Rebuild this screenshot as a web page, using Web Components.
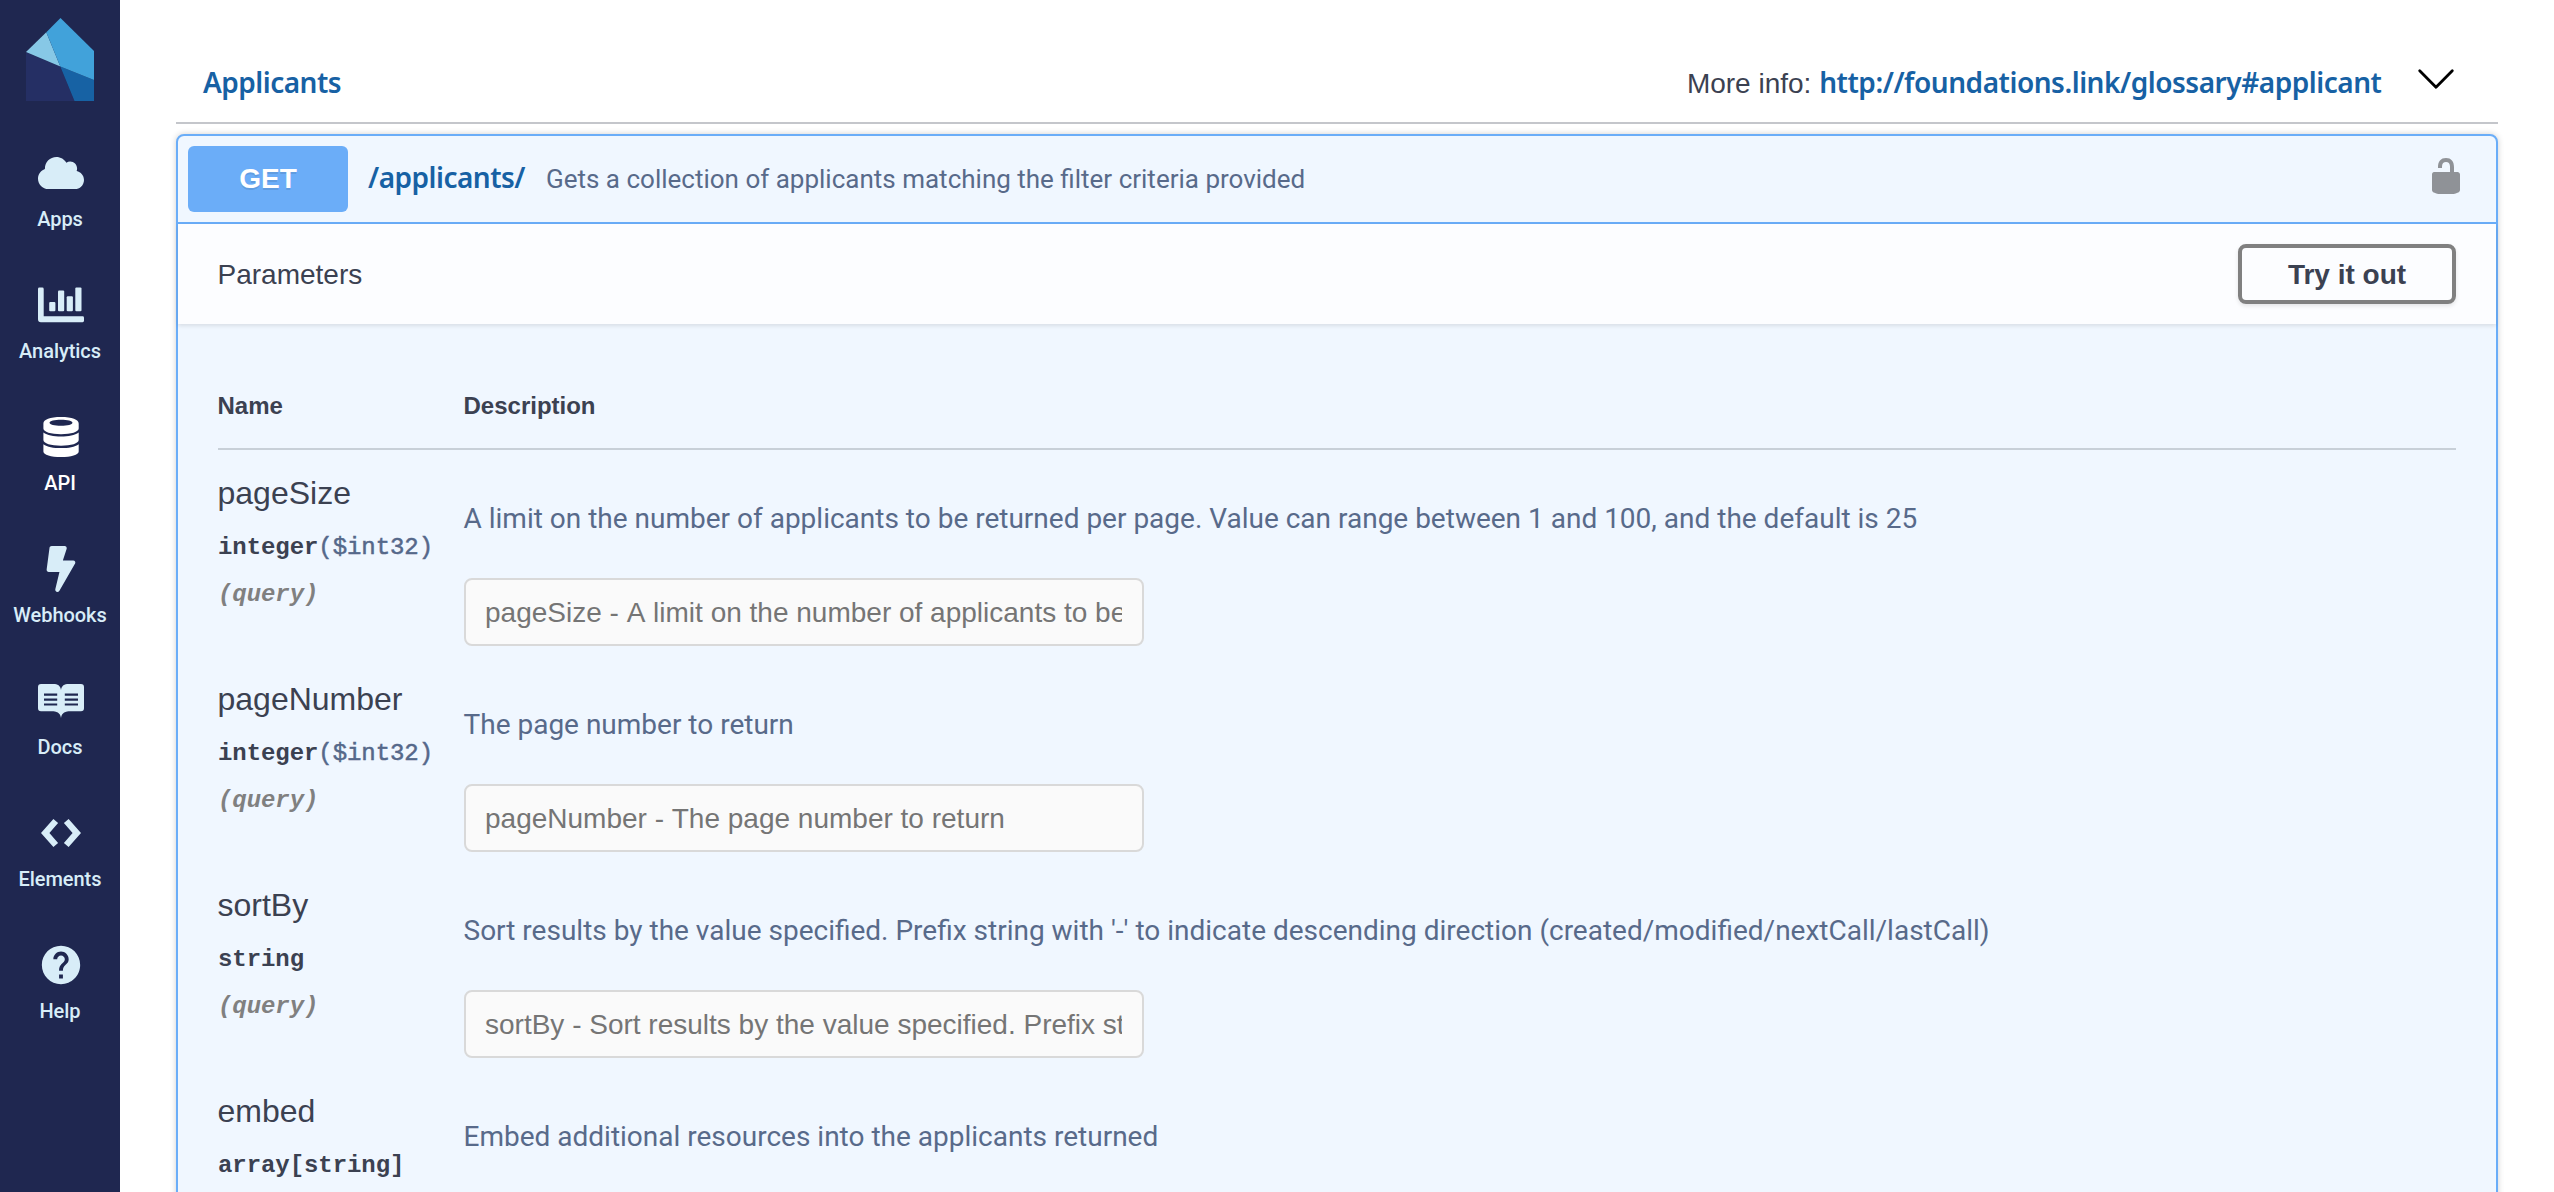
<!DOCTYPE html>
<html lang="en">
<head>
<meta charset="utf-8">
<title>API – Applicants</title>
<style>
html,body{margin:0;height:100%;overflow:hidden;background:#fff}
body{font-family:"Liberation Sans",Arial,sans-serif;color:#3b4151;font-size:28px}
</style>
</head>
<body>
<api-shell>
  <side-nav slot="nav">
    <nav-item icon="cloud">Apps</nav-item>
    <nav-item icon="chart">Analytics</nav-item>
    <nav-item icon="database" active>API</nav-item>
    <nav-item icon="bolt">Webhooks</nav-item>
    <nav-item icon="book">Docs</nav-item>
    <nav-item icon="code">Elements</nav-item>
    <nav-item icon="help">Help</nav-item>
  </side-nav>
  <tag-header link="http://foundations.link/glossary#applicant">Applicants</tag-header>
  <op-block method="GET" path="/applicants/" summary="Gets a collection of applicants matching the filter criteria provided">
    <param-row name="pageSize" type="integer" format="($int32)" hint="pageSize - A limit on the number of applicants to be returned per page">A limit on the number of applicants to be returned per page. Value can range between 1 and 100, and the default is 25</param-row>
    <param-row name="pageNumber" type="integer" format="($int32)" hint="pageNumber - The page number to return">The page number to return</param-row>
    <param-row name="sortBy" type="string" hint="sortBy - Sort results by the value specified. Prefix string with '-'">Sort results by the value specified. Prefix string with '-' to indicate descending direction (created/modified/nextCall/lastCall)</param-row>
    <param-row name="embed" type="array[string]">Embed additional resources into the applicants returned</param-row>
  </op-block>
</api-shell>
<script>
const ICONS = {
  cloud: '<svg viewBox="0 -64 640 640"><path d="M537.6 226.6c4.1-10.7 6.4-22.4 6.4-34.6 0-53-43-96-96-96-19.7 0-38.1 6-53.3 16.2C367 64.2 315.3 32 256 32c-88.4 0-160 71.6-160 160 0 2.7.1 5.4.2 8.1C40.2 219.8 0 273.2 0 336c0 79.5 64.5 144 144 144h368c70.7 0 128-57.3 128-128 0-61.9-44-113.6-102.4-125.4z"/></svg>',
  chart: '<svg viewBox="0 0 46 46"><path d="M1.4 5.500h2.900a1.400 1.400 0 0 1 1.400 1.400v27.400h38.900a1.400 1.400 0 0 1 1.400 1.400v3.100a1.400 1.400 0 0 1-1.400 1.400H2.900A2.900 2.900 0 0 1 0 37.300V6.900a1.400 1.400 0 0 1 1.400-1.400z"/><rect x="11.200" y="20" width="6.200" height="9.300" rx="1.100"/><rect x="20" y="8.500" width="6.200" height="20.800" rx="1.100"/><rect x="28.700" y="14.200" width="6.200" height="15.100" rx="1.100"/><rect x="37.300" y="5.500" width="6.200" height="23.800" rx="1.100"/></svg>',
  database: '<svg viewBox="0 0 46 46"><path fill-rule="evenodd" d="M5.400 9.500C5.400 5.500 12 3 23 3s17.700 2.500 17.700 6.500v5C40.700 18 33 20.200 23 20.200S5.400 18 5.400 14.500zM11.500 8.800c0 1.700 5 3 11.500 3s11.500-1.300 11.500-3-5-3-11.500-3-11.500 1.300-11.500 3z"/><path d="M5.400 18.600c3.800 2.800 10 4 17.600 4s13.900-1.200 17.700-4V26c0 3.500-7.700 5.700-17.700 5.700S5.400 29.500 5.400 26z"/><path d="M5.400 30.200c3.800 2.700 10 3.900 17.600 3.900s13.900-1.200 17.700-3.900v7.200c0 3.500-7.700 5.600-17.700 5.600S5.400 40.900 5.400 37.400z"/></svg>',
  bolt: '<svg viewBox="-96 0 512 512"><path d="M296 160H180.600l42.600-129.800C227.200 15 215.700 0 200 0H56C44 0 33.800 8.900 32.200 20.800l-32 240C-1.700 275.200 9.500 288 24 288h118.700L96.600 482.500c-3.600 15.200 8 29.500 23.300 29.500 8.400 0 16.400-4.400 20.800-12l176-304c9.300-15.900-2.200-36-20.700-36z"/></svg>',
  book: '<svg viewBox="0 0 46 46"><path fill-rule="evenodd" d="M3 6h12.500c4 0 7 1.600 7.500 6 .5-4.400 3.500-6 7.500-6H43a3 3 0 0 1 3 3v21.300a3 3 0 0 1-3 3H32.500c-5 0-8.700 1.200-9.500 6.700-.8-5.500-4.500-6.700-9.500-6.700H3a3 3 0 0 1-3-3V9a3 3 0 0 1 3-3zM6 15.600v2.200h13.200v-2.200zm0 4.900v2.200h13.200v-2.200zm0 4.900v2.200h13.200v-2.200zM26.800 15.600v2.200H40v-2.200zm0 4.900v2.200H40v-2.200zm0 4.900v2.200H40v-2.200z"/></svg>',
  code: '<svg viewBox="0 0 46 46"><path d="M15.400 9l4.700 4.100L11.400 23l8.700 9.900-4.700 4.100L3 23zM30.600 9l-4.700 4.100 8.700 9.900-8.700 9.900 4.700 4.100L43 23z"/></svg>',
  help: '<svg viewBox="0 0 24 24"><path d="M12 2C6.480 2 2 6.480 2 12s4.480 10 10 10 10-4.480 10-10S17.520 2 12 2zm1 17h-2v-2h2v2zm2.070-7.750l-.9.920C13.450 12.900 13 13.500 13 15h-2v-.5c0-1.100.45-2.100 1.170-2.830l1.240-1.260c.37-.36.59-.86.59-1.410 0-1.100-.9-2-2-2s-2 .9-2 2H8c0-2.210 1.790-4 4-4s4 1.790 4 4c0 .88-.36 1.680-.93 2.250z"/></svg>'
};

/* Each element renders its markup once into an open shadow root. */
class Base extends HTMLElement {
  connectedCallback() {
    if (this.shadowRoot) return;
    this.attachShadow({mode: 'open'}).innerHTML = '<style>*{box-sizing:border-box}' + this.css() + '</style>' + this.html();
  }
  attr(n) { return (this.getAttribute(n) || '').replace(/&/g, '&amp;').replace(/</g, '&lt;'); }
}

customElements.define('api-shell', class extends Base {
  css() { return `:host{display:flex;height:100vh;overflow:hidden}
    main{flex:1;min-width:0;padding:0 56px;overflow:hidden}`; }
  html() { return '<slot name="nav"></slot><main><slot></slot></main>'; }
});

customElements.define('side-nav', class extends Base {
  css() { return `:host{display:block;flex:none;width:120px;height:100%;background:#1f2750}
    .logo{display:block;width:68px;height:84px;margin:18px 0 48px 26px}`; }
  html() { return `<svg class="logo" viewBox="0 0 68 84">
      <path fill="#252f64" d="M0 34.200 34.300 48.500 48.500 83H0z"/>
      <path fill="#1762a4" d="M34.300 48.500 68 62v21H48.500z"/>
      <path fill="#87c8e6" d="M0 34 20.300 14.200 34.300 48.500z"/>
      <path fill="#41a2da" d="M20.300 14.200 34.500 0 68 33v29L34.300 48.500z"/>
    </svg><nav><slot></slot></nav>`; }
});

customElements.define('nav-item', class extends Base {
  css() { return `:host{display:flex;flex-direction:column;align-items:center;height:132px;color:#d8edf8}
    :host([active]){color:#fff}
    svg{display:block;width:46px;height:46px;margin-left:2px;fill:currentColor}
    span{margin-top:11px;font:500 20px/24px Roboto,sans-serif;letter-spacing:-.05px}`; }
  html() { return ICONS[this.getAttribute('icon')] + '<span><slot></slot></span>'; }
});

customElements.define('tag-header', class extends Base {
  css() { return `:host{display:flex;align-items:baseline;height:124px;padding:62px 43px 0 27px;border-bottom:2px solid #c4c6cb;line-height:40px;box-sizing:border-box}
    .t,a{font-family:"Noto Sans",sans-serif;font-weight:600;letter-spacing:-.51px;color:#1761a4;text-decoration:none}
    .t{flex:1}
    a{letter-spacing:-.47px}
    .i{white-space:pre}
    svg{flex:none;align-self:flex-start;width:38px;height:22px;margin:6px 0 0 35.500px}`; }
  html() { return `<span class="t"><slot></slot></span><span class="i">More info: <a>${this.attr('link')}</a></span>
    <svg viewBox="0 0 38 22"><path d="M2.700 2.700 19 19.200 35.300 2.700" fill="none" stroke="#000" stroke-width="2.800" stroke-linecap="round" stroke-linejoin="round"/></svg>`; }
});

customElements.define('op-block', class extends Base {
  css() { return `:host{display:block;margin-top:10px;height:1200px;border:2px solid #6aadf8;border-radius:8px;background:#f0f7ff;box-shadow:0 0 6px rgba(0,0,0,.19);box-sizing:border-box}
    .sum{display:flex;align-items:flex-start;height:88px;padding:10px 30px 0 10px;border-bottom:2px solid #6aadf8}
    .m{width:160px;height:66px;border-radius:6px;background:#6badf8;color:#fff;font-weight:700;line-height:65px;text-align:center;text-shadow:0 2px 0 rgba(0,0,0,.1)}
    .txt{flex:1;display:flex;align-items:baseline;gap:21px;margin:11px 0 0 20px;line-height:40px}
    .p{font-family:"Noto Sans",sans-serif;font-weight:600;letter-spacing:-.51px;color:#1761a4}
    .d{font-family:Roboto,sans-serif;font-size:26px;color:#586a8a}
    .lock{width:40px;height:40px;margin-top:10px;fill:#8f9297}
    .bar{display:flex;align-items:center;justify-content:space-between;height:100px;padding:0 40px 0 39.500px;background:#fcfdff;box-shadow:0 2px 4px rgba(0,0,0,.1)}
    .bar span{padding-top:2px}
    button{width:218px;height:60px;padding:1px 0 0;border:4px solid #808080;border-radius:8px;background:transparent;box-shadow:0 2px 4px rgba(0,0,0,.1);font:700 28px "Liberation Sans",Arial,sans-serif;color:#3b4151}
    .tbl{padding:0 40px}
    .head{display:flex;align-items:flex-end;height:126px;padding-bottom:24px;border-bottom:2px solid #c8d0d8;font-size:24px;font-weight:700;line-height:36px}
    .head span:first-child{width:246px;margin-left:-.5px}`; }
  html() { return `<div class="sum"><div class="m">${this.attr('method')}</div>
      <div class="txt"><span class="p">${this.attr('path')}</span><span class="d">${this.attr('summary')}</span></div>
      <svg class="lock" viewBox="0 0 20 20"><path d="M15.800 8H14V5.600C14 2.703 12.665 1 10 1 7.334 1 6 2.703 6 5.600V6h2v-.801C8 3.754 8.797 3 10 3c1.203 0 2 .754 2 2.199V8H4c-.553 0-1 .646-1 1.199V17c0 .549.428 1.139.951 1.307l1.197.387C5.672 18.861 6.550 19 7.100 19h5.800c.549 0 1.428-.139 1.951-.307l1.196-.387c.524-.167.953-.757.953-1.306V9.199C17 8.646 16.352 8 15.800 8z"/></svg></div>
    <div class="bar"><span>Parameters</span><button>Try it out</button></div>
    <div class="tbl"><div class="head"><span>Name</span><span>Description</span></div><slot></slot></div>`; }
});

customElements.define('param-row', class extends Base {
  css() { return `:host{display:flex;height:206px}
    .n{width:246px;padding-top:21px}
    .name{margin-left:-.5px;font-size:32px;line-height:44px}
    .type,.in{font:700 24px/40px "Liberation Mono",monospace;letter-spacing:-.07px;white-space:nowrap}
    .type{margin-top:13px}
    .type span{font-weight:400;color:#55688a;-webkit-text-stroke:.5px #55688a}
    .in{margin-top:7px;font-style:italic;color:#808080}
    .c{padding-top:47px}
    .desc{margin-left:-.5px;font-family:Roboto,sans-serif;line-height:44px;color:#586a8a;white-space:nowrap}
    .box{width:680px;height:68px;margin-top:37px;padding:1px 20px 0 19px;border:2px solid #d9d9d9;border-radius:8px;background:#fafafa;color:#757575;line-height:63px}
    .box div{overflow:hidden;white-space:nowrap;line-height:64px;height:63px;font-kerning:none}`; }
  html() {
    const f = this.attr('format'), h = this.attr('hint');
    return `<div class="n"><div class="name">${this.attr('name')}</div><div class="type">${this.attr('type')}${f ? `<span>${f}</span>` : ''}</div>${h ? '<div class="in">(query)</div>' : ''}</div>
    <div class="c"><div class="desc"><slot></slot></div>${h ? `<div class="box"><div>${h}</div></div>` : ''}</div>`;
  }
});
</script>
</body>
</html>
